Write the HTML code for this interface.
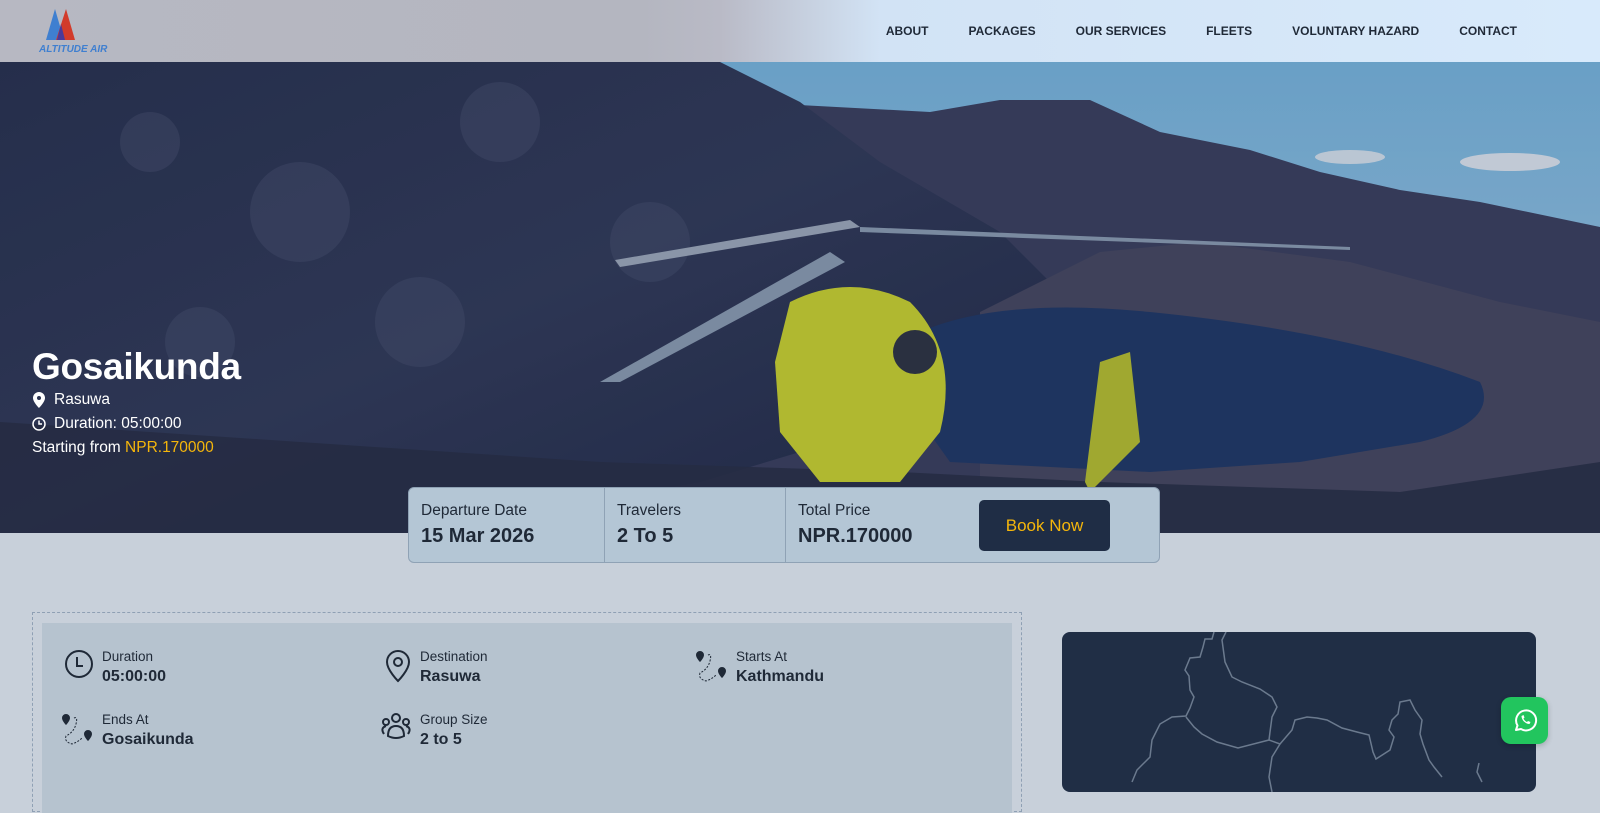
<!DOCTYPE html>
<html><head><meta charset="utf-8"><style>
*{margin:0;padding:0;box-sizing:border-box}
body{width:1600px;height:779px;overflow:hidden;background:#c8d0da;font-family:"Liberation Sans",sans-serif;position:relative;color:#1f2937}
.nav{position:absolute;left:0;top:0;width:1600px;height:62px;background:linear-gradient(90deg,#b7b8c2 0%,#b4b6c0 40%,#b9bac6 45%,#d2e3f5 55%,#d8eafb 100%);z-index:3}
.nav ul{position:absolute;right:83px;top:24px;display:flex;gap:40px;list-style:none;font-size:12px;font-weight:bold;color:#1f2937}
.hero{position:absolute;left:0;top:62px;width:1600px;height:471px;overflow:hidden}
.htxt{position:absolute;left:32px;top:346px;color:#fff;z-index:2}
.htxt h1{font-size:37px;font-weight:900;letter-spacing:-0.3px;line-height:42px}
.htxt div{font-size:15.5px;line-height:24px;display:flex;align-items:center;gap:8px}
.bar{position:absolute;left:408px;top:487px;width:752px;height:76px;background:#b4c6d5;border:1px solid #8fa2b5;border-radius:6px;z-index:4;display:flex}
.bar .c{padding:14px 12px;border-right:1px solid #8fa2b5}
.bar .l{font-size:15.5px;color:#1f2937}
.bar .v{font-size:20px;font-weight:bold;margin-top:5px;color:#1f2937}
.btn{position:absolute;left:570px;top:12px;width:131px;height:51px;background:#1f2d45;border-radius:5px;color:#f5b60b;font-size:17px;display:flex;align-items:center;justify-content:center}
.det{position:absolute;left:32px;top:612px;width:990px;height:200px;border:1.5px dashed #8fa0b4}
.inner{position:absolute;left:9px;top:10px;width:970px;height:190px;background:#b6c3cf}
.it{position:absolute;display:flex;gap:8px}
.it .l{font-size:13.5px;color:#1f2937}
.it .v{font-size:16px;font-weight:bold;margin-top:4px;color:#1f2937}
.map{position:absolute;left:1062px;top:632px;width:474px;height:160px;background:#202e45;border-radius:8px;overflow:hidden}
.wa{position:absolute;left:1501px;top:697px;width:47px;height:47px;background:#22c55e;border-radius:10px;display:flex;align-items:center;justify-content:center;box-shadow:0 2px 6px rgba(0,0,0,.2)}
</style></head><body>
<div class="nav">
<svg style="position:absolute;left:38px;top:6px" width="70" height="50" viewBox="0 0 70 50">
<polygon points="8,34 17,3 26,34" fill="#3f7fd0"/><polygon points="18,34 28,3 37,34" fill="#d23b2b"/><polygon points="19,34 23,18 27,34" fill="#4a3a9a"/>
<text x="1" y="46" font-family="Liberation Sans" font-weight="bold" font-style="italic" font-size="10" fill="#3f7fd0">ALTITUDE AIR</text></svg>
<ul><li>ABOUT</li><li>PACKAGES</li><li>OUR SERVICES</li><li>FLEETS</li><li>VOLUNTARY HAZARD</li><li>CONTACT</li></ul>
</div>
<div class="hero">
<svg width="1600" height="471" viewBox="0 0 1600 471">
<defs><linearGradient id="sky" x1="0" y1="0" x2="0" y2="1"><stop offset="0" stop-color="#7dbde6"/><stop offset="1" stop-color="#b0d4ec"/></linearGradient>
<linearGradient id="dk" x1="0" y1="0" x2="1" y2="1"><stop offset="0" stop-color="#2a3350"/><stop offset="0.5" stop-color="#343c5a"/><stop offset="1" stop-color="#222b48"/></linearGradient></defs>
<rect width="1600" height="471" fill="url(#sky)"/>
<ellipse cx="1510" cy="100" rx="50" ry="9" fill="#e8f0f8"/><ellipse cx="1350" cy="95" rx="35" ry="7" fill="#e0ecf6"/>
<path d="M930 50 L1000 38 1090 38 1160 70 1250 88 1320 110 1400 128 1480 140 1600 165 L1600 471 0 471 0 0Z" fill="#3d4160"/>
<path d="M0 0 L720 0 800 40 880 100 1000 170 1050 220 1000 300 900 360 700 420 400 471 0 471Z" fill="url(#dk)"/>
<path d="M980 250 L1100 190 1200 180 1350 200 1500 240 1600 260 L1600 471 980 471Z" fill="#4a4a62"/>
<path d="M920 270 Q1000 235 1150 250 Q1350 270 1480 320 Q1500 360 1420 380 L1300 400 1150 410 950 400 900 330Z" fill="#223a68"/>
<path d="M0 360 L300 380 600 400 900 410 1100 420 1400 430 1600 400 L1600 471 0 471Z" fill="#2a3046" opacity=".9"/>
<g fill="#4a5270" opacity=".5"><circle cx="150" cy="80" r="30"/><circle cx="300" cy="150" r="50"/><circle cx="500" cy="60" r="40"/><circle cx="420" cy="260" r="45"/><circle cx="650" cy="180" r="40"/><circle cx="200" cy="280" r="35"/></g>
<rect x="0" y="0" width="1600" height="471" fill="#0f1a3a" opacity=".18"/>
<path d="M600 320 L830 190 845 200 620 320Z" fill="#7a8aa0"/>
<path d="M615 198 L850 158 860 165 620 205Z" fill="#8a95a8"/>
<path d="M860 165 L1350 185 L1350 188 860 170Z" fill="#7a8aa0"/>
<path d="M790 240 Q850 210 910 240 Q960 290 940 370 L900 420 820 420 780 370 775 300Z" fill="#b0b830"/>
<circle cx="915" cy="290" r="22" fill="#2a3040"/>
<path d="M1100 300 L1130 290 1140 380 1090 430 1085 420Z" fill="#a0a830"/>
</svg>
</div>
<div class="htxt">
<h1>Gosaikunda</h1>
<div><svg width="14" height="16" viewBox="0 0 14 16"><path d="M7 0a6 6 0 0 0-6 6c0 4 6 10 6 10s6-6 6-10a6 6 0 0 0-6-6zm0 8a2 2 0 1 1 0-4 2 2 0 0 1 0 4z" fill="#fff"/></svg>Rasuwa</div>
<div><svg width="14" height="14" viewBox="0 0 14 14"><circle cx="7" cy="7" r="6" fill="none" stroke="#fff" stroke-width="1.5"/><path d="M7 3.5V7h3" fill="none" stroke="#fff" stroke-width="1.5"/></svg>Duration: 05:00:00</div>
<div style="display:block">Starting from <span style="color:#f5b60b">NPR.170000</span></div>
</div>
<div class="bar">
<div class="c" style="width:196px"><div class="l">Departure Date</div><div class="v">15 Mar 2026</div></div>
<div class="c" style="width:181px"><div class="l">Travelers</div><div class="v">2 To 5</div></div>
<div class="c" style="border:none"><div class="l">Total Price</div><div class="v">NPR.170000</div></div>
<div class="btn">Book Now</div>
</div>
<div class="det"><div class="inner">
<div class="it" style="left:22px;top:26px"><svg width="30" height="30" viewBox="0 0 30 30"><circle cx="15" cy="15" r="13" fill="none" stroke="#1f2937" stroke-width="2"/><path d="M13 8v9h6" fill="none" stroke="#1f2937" stroke-width="2"/></svg><div><div class="l">Duration</div><div class="v">05:00:00</div></div></div>
<div class="it" style="left:342px;top:26px"><svg width="28" height="34" viewBox="0 0 28 34"><path d="M14 2a11 11 0 0 0-11 11c0 8 11 19 11 19s11-11 11-19A11 11 0 0 0 14 2z" fill="none" stroke="#1f2937" stroke-width="2"/><circle cx="14" cy="13" r="4" fill="none" stroke="#1f2937" stroke-width="2"/></svg><div><div class="l">Destination</div><div class="v">Rasuwa</div></div></div>
<div class="it" style="left:654px;top:26px"><svg width="32" height="34" viewBox="0 0 32 34"><path d="M4 2a4 4 0 0 0-4 4c0 3 4 7 4 7s4-4 4-7a4 4 0 0 0-4-4z M26 18a4 4 0 0 0-4 4c0 3 4 7 4 7s4-4 4-7a4 4 0 0 0-4-4z" fill="#1f2937"/><path d="M12 6q4 -2 2 6t-10 12q-2 6 6 8q6-2 10-6" fill="none" stroke="#1f2937" stroke-width="1" stroke-dasharray="2 1.5"/></svg><div><div class="l">Starts At</div><div class="v">Kathmandu</div></div></div>
<div class="it" style="left:20px;top:89px"><svg width="32" height="34" viewBox="0 0 32 34"><path d="M4 2a4 4 0 0 0-4 4c0 3 4 7 4 7s4-4 4-7a4 4 0 0 0-4-4z M26 18a4 4 0 0 0-4 4c0 3 4 7 4 7s4-4 4-7a4 4 0 0 0-4-4z" fill="#1f2937"/><path d="M12 6q4 -2 2 6t-10 12q-2 6 6 8q6-2 10-6" fill="none" stroke="#1f2937" stroke-width="1" stroke-dasharray="2 1.5"/></svg><div><div class="l">Ends At</div><div class="v">Gosaikunda</div></div></div>
<div class="it" style="left:338px;top:89px"><svg width="32" height="30" viewBox="0 0 32 30"><g fill="none" stroke="#1f2937" stroke-width="2"><circle cx="16" cy="6" r="4"/><circle cx="6" cy="10" r="3"/><circle cx="26" cy="10" r="3"/><path d="M8 24q0-10 8-10t8 10q-8 4-16 0zM4 22q-4-6 2-8M28 22q4-6-2-8"/></g></svg><div><div class="l">Group Size</div><div class="v">2 to 5</div></div></div>
</div></div>
<div class="map"><svg width="474" height="160" viewBox="0 0 474 160"><g fill="none" stroke="#6b7a8e" stroke-width="1.5">
<path d="M152 0 L150 7 143 7 141 15 138 25 128 26 123 38 127 44 128 58 132 65 128 76 124 84 110 85 98 92 90 108 88 125 75 138 70 150"/>
<path d="M164 0 L160 8 163 30 170 45 180 50 198 57 210 65 215 75 210 85 208 100 207 108 176 116 155 110 140 102 132 95 124 85"/>
<path d="M207 108 L218 112 230 98 233 88 245 85 255 86 265 88 280 96 295 100 307 103 311 120 314 127 328 118 332 105 327 98 330 88 336 82 338 70 348 68 353 78 360 88 358 102 361 112 367 128 372 135 380 145"/>
<path d="M218 112 L210 125 207 145 210 160"/><path d="M420 150 L415 140 417 131"/></g></svg></div>
<div class="wa"><svg width="28" height="28" viewBox="0 0 28 28"><path d="M5 23l1.5-4.5A10 10 0 1 1 10 22z" fill="none" stroke="#fff" stroke-width="2" stroke-linejoin="round"/><path d="M10.5 9c0 4 4 8 8 8l1-2-2.5-1-1 1c-1.5-.5-3-2-3.5-3.5l1-1-1-2.5z" fill="#fff"/></svg></div>
</body></html>
